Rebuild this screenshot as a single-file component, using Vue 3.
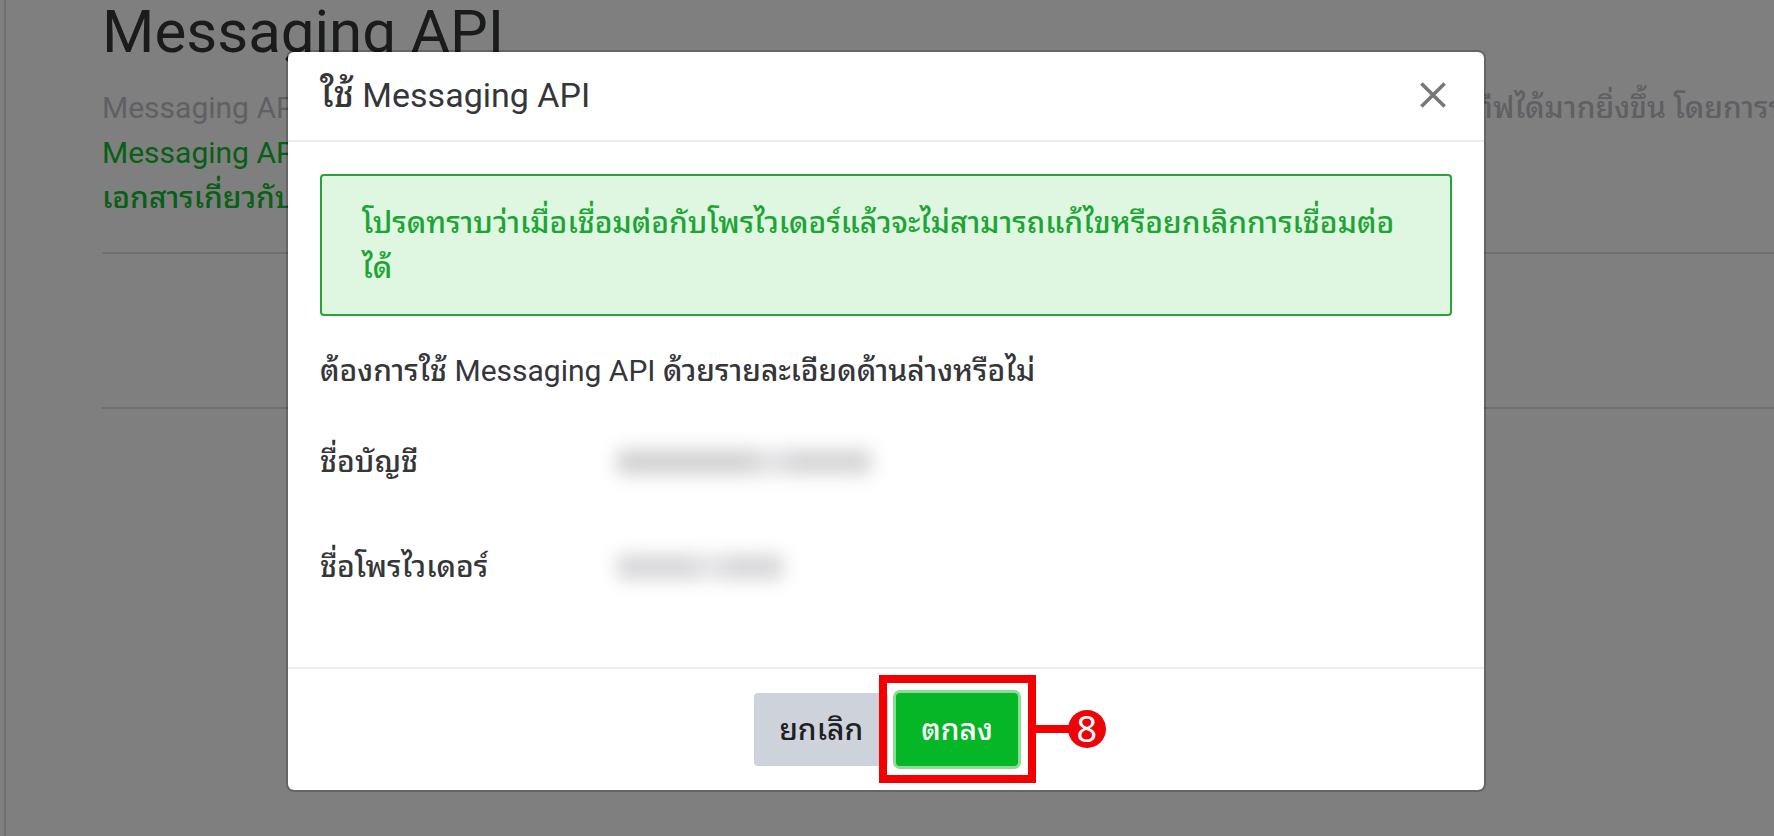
<script setup>
const rows = [
  { label: 'ชื่อบัญชี', kind: 'account' },
  { label: 'ชื่อโพรไวเดอร์', kind: 'provider' },
]
</script>

<template>
  <div class="page">
    <main class="content">
      <h1>Messaging API</h1>
      <p class="intro">
        <span class="intro-start">Messaging API</span>
        <span class="intro-end" lang="th">ทีฟได้มากยิ่งขึ้น โดยการร</span>
      </p>
      <a href="#">Messaging API</a>
      <a href="#" lang="th">เอกสารเกี่ยวกับ</a>
      <hr />
      <hr />
    </main>

    <div class="backdrop">
      <section class="modal" role="dialog" aria-modal="true" aria-labelledby="modal-title">
        <header class="modal-header">
          <h2 id="modal-title"><span class="large" lang="th">ใช้</span> Messaging API</h2>
          <button class="close" type="button" aria-label="ปิด">
            <svg viewBox="0 0 26 26" width="26" height="26" aria-hidden="true">
              <path d="M1.4 1.4 24.6 24.6M24.6 1.4 1.4 24.6" stroke="#777" stroke-width="3.6" fill="none" />
            </svg>
          </button>
        </header>

        <div class="modal-body">
          <p class="notice" lang="th">โปรดทราบว่าเมื่อเชื่อมต่อกับโพรไวเดอร์แล้วจะไม่สามารถแก้ไขหรือยกเลิกการเชื่อมต่อ<br />ได้</p>
          <p class="question">
            <span lang="th">ต้องการใช้</span> Messaging API
            <span lang="th">ด้วยรายละเอียดด้านล่างหรือไม่</span>
          </p>
          <dl>
            <div v-for="row in rows" :key="row.kind" class="row">
              <dt lang="th">{{ row.label }}</dt>
              <dd><span class="masked" :class="row.kind"></span></dd>
            </div>
          </dl>
        </div>

        <footer class="modal-footer">
          <button class="btn cancel" type="button">ยกเลิก</button>
          <div class="target">
            <button class="btn confirm" type="button">ตกลง</button>
            <div class="callout">
              <span class="frame"></span>
              <span class="lead"></span>
              <span class="step">8</span>
            </div>
          </div>
        </footer>
      </section>
    </div>
  </div>
</template>

<style>
body {
  margin: 0;
}
</style>

<style scoped>
.page {
  position: relative;
  box-sizing: border-box;
  min-height: 100vh;
  overflow: hidden;
  padding-left: 4px;
  background: #fff;
  font-family: Roboto, "Noto Sans Thai Looped", Loma, Garuda, "Noto Sans Thai", "Noto Sans", sans-serif;
  font-size: 30px;
  line-height: 45px;
  color: #35363a;
}
[lang="th"] {
  font-weight: 500;
}
.content {
  box-sizing: border-box;
  min-height: 100vh;
  padding-left: 96px;
  border-left: 2px solid #dedede;
}
h1 {
  margin: 0 0 21px;
  font-size: 60px;
  line-height: 64px;
  font-weight: 400;
  color: #35363a;
}
.intro {
  display: flex;
  margin: 0;
  color: #bec0c6;
  white-space: nowrap;
}
.intro-start {
  flex: 1;
}
.intro-end {
  width: 18%;
}
.content a {
  display: block;
  color: #0cc02c;
  text-decoration: none;
}
hr {
  height: 2px;
  margin: 32px 0 0;
  border: 0;
  background: #dedede;
}
hr + hr {
  margin-top: 153px;
}
.backdrop {
  position: absolute;
  inset: 0;
  padding: 50px 18px 50px 16px;
  background: rgba(0, 0, 0, 0.5);
}
.modal {
  box-sizing: border-box;
  max-width: 1200px;
  margin: 0 auto;
  border: 2px solid rgba(0, 0, 0, 0.2);
  border-radius: 8px;
  background: #fff;
  background-clip: padding-box;
}
.modal-header {
  display: flex;
  align-items: center;
  justify-content: space-between;
  height: 86px;
  padding: 0 32px 2px;
  border-bottom: 2px solid #ececec;
}
h2 {
  margin: 0;
  font-size: 34px;
  font-weight: 400;
}
h2 .large {
  font-size: 36px;
}
.close {
  display: flex;
  padding: 6px;
  border: 0;
  background: none;
}
.modal-body {
  padding: 32px 32px 78px;
}
p {
  margin: 0;
}
.notice {
  padding: 24px 40px;
  border: 2px solid #2aa23c;
  border-radius: 4px;
  background: #dff6e0;
  color: #1ba534;
}
.question {
  margin-top: 32px;
}
dl {
  display: grid;
  gap: 60px;
  margin: 46px 0 0;
}
.row {
  display: flex;
  align-items: center;
}
dt {
  width: 296px;
}
dd {
  margin: 0;
}
.masked {
  display: block;
  height: 26px;
  border-radius: 8px;
  filter: blur(9px);
}
.account {
  width: 256px;
  background: linear-gradient(90deg, #d2d2d4 0 50%, #e4e4e6 60% 62%, #d6d6d8 70%);
}
.provider {
  width: 168px;
  background: linear-gradient(90deg, #d8d8da 0 44%, #e6e6e8 54% 58%, #d8d8da 68%);
}
.modal-footer {
  display: flex;
  justify-content: center;
  gap: 8px;
  padding: 24px;
  border-top: 2px solid #ececec;
}
.btn {
  height: 73px;
  padding: 0 25px;
  border: 0;
  border-radius: 4px;
  font: inherit;
  font-weight: 500;
}
.cancel {
  background: #ced3db;
  color: #1e2024;
}
.target {
  position: relative;
}
.confirm {
  background: #05b726;
  box-shadow: 0 0 0 3px #8add95;
  color: #fff;
}
.callout {
  position: absolute;
  inset: -18px -88px -17px -17px;
  display: flex;
  align-items: center;
  pointer-events: none;
}
.frame {
  box-sizing: border-box;
  flex: 1;
  height: 100%;
  border: 8px solid #f40000;
}
.lead {
  width: 36px;
  height: 8px;
  margin-right: -4px;
  background: #f40000;
}
.step {
  width: 38px;
  height: 38px;
  border-radius: 50%;
  background: #ec0408;
  color: #fff;
  font-family: "Noto Sans", sans-serif;
  font-size: 36px;
  line-height: 38px;
  text-align: center;
}
</style>
